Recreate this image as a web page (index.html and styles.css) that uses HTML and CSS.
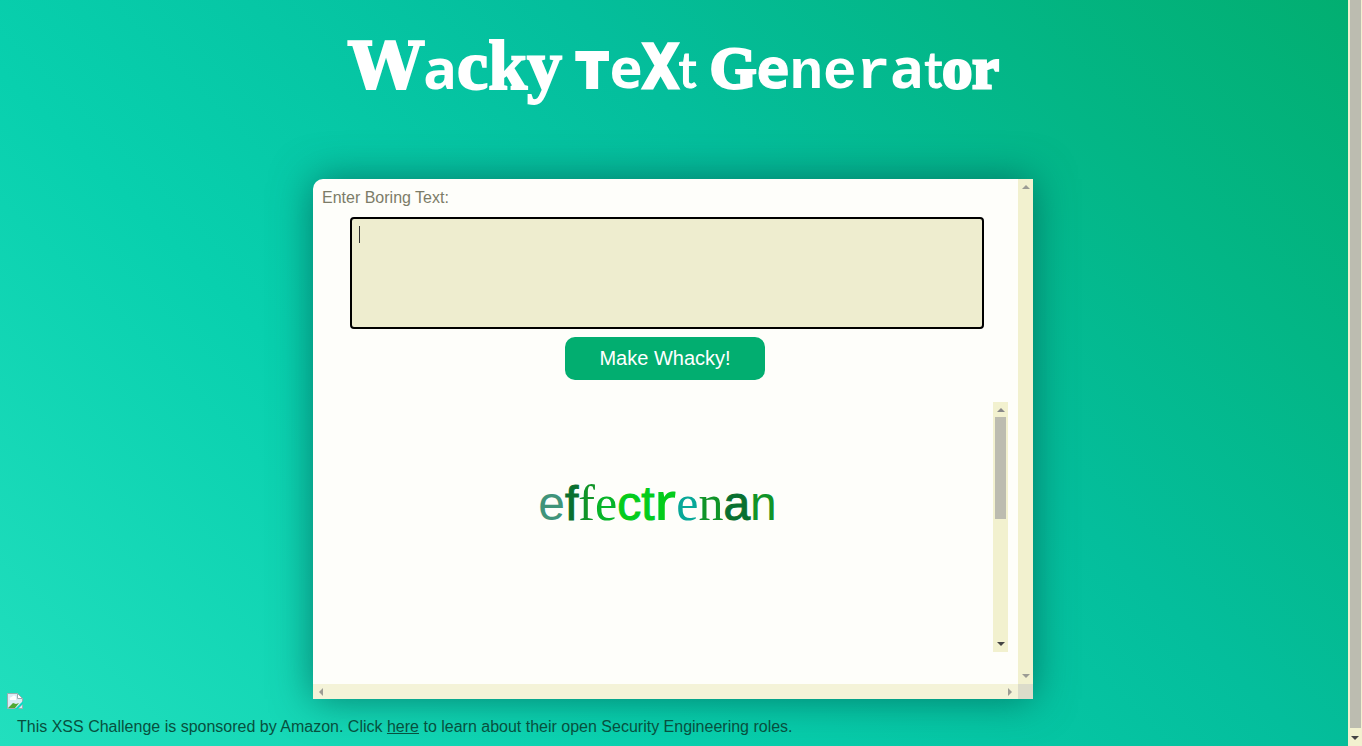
FILE: index.html
```html
<!DOCTYPE html>
<html lang="en">
<head>
<meta charset="utf-8">
<title>Wacky Text Generator</title>
<link rel="stylesheet" href="styles.css">
</head>
<body>
<div class="window">
  <div class="page">
    <h1 class="title"><span class="word"><span class="slab">W</span><span class="sans">a</span><span class="serif">c</span><span class="serif">k</span><span class="serif">y</span></span><span class="word"><span class="heavy">T</span><span class="sans">e</span><span class="block">X</span><span class="thin">t</span></span><span class="word"><span class="didone">G</span><span class="bold">e</span><span class="mono">n</span><span class="mono">e</span><span class="mono">r</span><span class="sans">a</span><span class="thin">t</span><span class="didone">o</span><span class="didone">r</span></span></h1>
    <main class="card">
      <form class="content">
        <label class="label" for="boring">Enter Boring Text:</label>
        <div class="field">
          <textarea class="entry" id="boring" autofocus></textarea>
          <span class="caret" aria-hidden="true"></span>
        </div>
        <button class="make" type="button">Make Whacky!</button>
        <div class="output">
          <output class="result" for="boring"><span class="o-sans slate">e</span><span class="o-sans heavier forest">f</span><span class="o-serif green">f</span><span class="o-serif fresh">e</span><span class="o-sans heavier lime">c</span><span class="o-sans heavier lime">t</span><span class="o-round lime">r</span><span class="o-serif teal">e</span><span class="o-serif green">n</span><span class="o-sans heavier forest">a</span><span class="o-sans green">n</span></output>
          <div class="bar live" aria-hidden="true"><i class="arrow up"></i><i class="thumb"></i><i class="arrow down"></i></div>
        </div>
      </form>
      <div class="bar idle" aria-hidden="true"><i class="arrow up"></i><i class="arrow down"></i></div>
      <div class="bar-row" aria-hidden="true"><i class="arrow left"></i><i class="arrow right"></i></div>
      <div class="corner"></div>
    </main>
    <footer class="footer">
      <svg class="broken" viewBox="0 0 16 16" role="img" aria-label="Sponsor logo">
        <path d="M.5.5h10l5 5v10H.5z" fill="#dcebf5" stroke="#9aaeb0"/>
        <path d="M10.500.5v5h5z" fill="#fff" stroke="#9aaeb0"/>
        <path d="M3 7a2 2 0 0 1 2-3 2 2 0 0 1 4 1v2z" fill="#fff"/>
        <path d="M1 15l5-5 3 1 3-1-4 5z" fill="#4fa832"/>
        <path d="M16 8l-8 8h3l5-5z" fill="#0edac2"/>
      </svg>
      <p class="note">This XSS Challenge is sponsored by Amazon. Click <a class="link" href="#">here</a> to learn about their open Security Engineering roles.</p>
    </footer>
  </div>
  <div class="bar page-bar" aria-hidden="true"><i class="thumb"></i><i class="arrow down"></i></div>
</div>
</body>
</html>
```
FILE: styles.css
```css
* { box-sizing: border-box; }
body {
  margin: 0;
  font: 16px/20px "Liberation Sans", Arial, sans-serif;
}
.window {
  display: flex;
  min-height: 100vh;
  background: linear-gradient(45deg, #22dfbe 0%, #08d0ae 32%, #04be9c 62%, #02ae70 100%);
}
.page {
  flex: 1;
  display: flex;
  flex-direction: column;
  min-width: 0;
}

.title {
  display: flex;
  justify-content: center;
  gap: 13px;
  height: 179px;
  margin: 0;
  padding-top: 22px;
  color: #fff;
  line-height: 88px;
}
.word { display: flex; align-items: baseline; height: 88px; }
.slab { font: 700 66px/88px "DejaVu Serif", serif; -webkit-text-stroke: 2px #fff; }
.sans { font: 700 56px/88px "Open Sans", sans-serif; }
.serif { font: 900 70px/88px "Liberation Serif", serif; -webkit-text-stroke: 2px #fff; }
.heavy { font: 900 50px/88px Inter, sans-serif; -webkit-text-stroke: 2px #fff; }
.block { font: 700 60px/88px "DejaVu Sans Mono", monospace; -webkit-text-stroke: 3px #fff; }
.thin { font: 500 50px/88px Lato, sans-serif; -webkit-text-stroke: 1px #fff; }
.didone { font: 900 60px/88px "Liberation Serif", serif; -webkit-text-stroke: 3px #fff; }
.bold { font: 700 56px/88px "Open Sans", sans-serif; -webkit-text-stroke: 1px #fff; }
.mono { font: 700 56px/88px "Liberation Mono", monospace; }

.card {
  display: grid;
  grid-template: 1fr 15px / 1fr 15px;
  align-self: center;
  width: 720px;
  max-width: 100%;
  min-height: 520px;
  margin-right: 2px;
  border-radius: 10px 0 0 0;
  background: #fefefa;
  box-shadow: 0 0 40px rgba(0, 90, 80, 0.7);
}
.content {
  display: flex;
  flex-direction: column;
  align-items: center;
  padding: 9px 10px 32px 9px;
}
.label { align-self: flex-start; color: #7c7c68; }
.field {
  position: relative;
  width: 634px;
  max-width: 100%;
  height: 112px;
  margin: 9px 0 8px 4px;
}
.entry {
  width: 100%;
  height: 100%;
  padding: 8px;
  border: 2px solid #000;
  border-radius: 4px;
  outline: none;
  background: #eeedcf;
  caret-color: transparent;
  font: inherit;
  resize: none;
}
.caret {
  position: absolute;
  top: 9px;
  left: 9px;
  width: 1px;
  height: 17px;
  background: #333;
}
.make {
  width: 200px;
  height: 43px;
  padding: 0 0 2px;
  border: 0;
  border-radius: 10px;
  background: #02ae70;
  color: #fff;
  font: 20px/24px "Liberation Sans", Arial, sans-serif;
}
.output {
  align-self: stretch;
  display: flex;
  height: 250px;
  margin-top: 22px;
}
.result {
  flex: 1;
  display: flex;
  justify-content: center;
  align-items: baseline;
  padding-top: 63px;
}
.o-sans { font: 48px/72px "Liberation Sans", sans-serif; }
.heavier { -webkit-text-stroke: 1px currentColor; }
.o-serif { font: 50px/72px "Liberation Serif", serif; }
.o-round { font: 600 50px/72px "Noto Sans", sans-serif; }
.slate { color: #40947a; }
.forest { color: #087030; }
.green { color: #109428; }
.fresh { color: #08b428; }
.lime { color: #04cc1c; }
.teal { color: #08a898; }

.bar {
  display: flex;
  flex-direction: column;
  align-items: center;
  width: 15px;
  padding: 5px 0;
  background: #f2f1cf;
  color: #9c9c94;
}
.arrow {
  width: 0;
  height: 0;
  border: 4px solid transparent;
}
.up { margin-top: -3px; border-bottom-color: currentColor; }
.down { margin: auto 0 -3px; border-top-color: currentColor; }
.left { border-right-color: currentColor; }
.right { border-left-color: currentColor; }
.live .up { border-bottom-color: #888; }
.live .down, .page-bar .down { border-top-color: #444; }
.thumb { width: 11px; background: #bcbcb0; }
.live .thumb { height: 102px; margin-top: 5px; }
.page-bar { width: 14px; padding-top: 0; }
.page-bar .thumb { flex: 1; margin-bottom: 8px; }
.bar-row {
  display: flex;
  justify-content: space-between;
  align-items: center;
  padding: 0 2px;
  background: #f4f3d8;
  color: #9c9c94;
}
.corner { background: #dcdcca; }

.footer { margin-top: -6px; padding: 0 7px 9px; }
.broken { display: block; width: 16px; height: 16px; }
.note { margin: 8px 10px 0; color: #07503e; }
.link { color: inherit; }
```
